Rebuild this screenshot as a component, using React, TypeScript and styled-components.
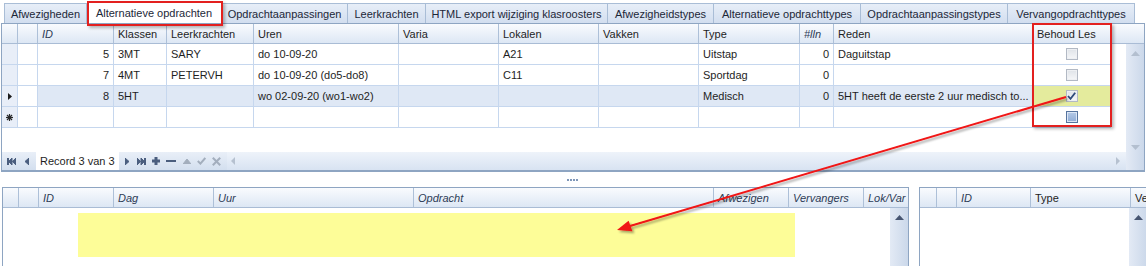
import React from 'react';
import styled, { createGlobalStyle } from 'styled-components';

const GlobalStyle = createGlobalStyle`
  html, body { margin: 0; padding: 0; background: #ffffff; }
  body {
    font-family: "Liberation Sans", Arial, sans-serif;
    font-size: 11px;
    color: #1e1e1e;
  }
  * { box-sizing: border-box; }
`;

const TOP_COLS = '16px 20px 76px 53px 87px 145px 100px 100px 100px 101px 34px 199px 78px';
const LEFT_COLS = '16px 20px 75px 100px 200px 300px 75px 75px 1fr';
const RIGHT_COLS = '17px 20px 74px 100px 1fr';

const Page = styled.div`
  position: relative;
  width: 1146px;
  height: 266px;
  overflow: hidden;
  background: #fff;
  display: flex;
  flex-direction: column;
`;

const TabStrip = styled.div`
  height: 23px;
  flex-shrink: 0;
  display: flex;
  align-items: flex-end;
  padding-left: 4px;
`;

const Tab = styled.div<{ $w: number; $active?: boolean }>`
  width: ${p => p.$w}px;
  height: ${p => (p.$active ? 22 : 20)}px;
  display: flex;
  align-items: center;
  justify-content: center;
  border: 1px solid #a9bdd6;
  border-left-width: 0;
  border-bottom: none;
  background: ${p => (p.$active ? '#ffffff' : 'linear-gradient(#e7eef8, #d2deef)')};
  color: #1c2738;
  white-space: nowrap;
  &:first-child { border-left-width: 1px; }
`;

const GridBox = styled.div`
  margin-left: 1px;
  width: 1144px;
  height: 149px;
  flex-shrink: 0;
  border: 1px solid #8ea5c2;
  border-bottom-width: 2px;
  display: flex;
  flex-direction: column;
`;

const HeaderRow = styled.div<{ $cols: string }>`
  height: 20px;
  flex-shrink: 0;
  display: grid;
  grid-template-columns: ${p => p.$cols};
  background: linear-gradient(#f9fbfe, #dde7f4);
  border-bottom: 1px solid #a9bcd5;
`;

const HeadCell = styled.div<{ $italic?: boolean }>`
  display: flex;
  align-items: center;
  padding-left: 4px;
  border-right: 1px solid #adc0d8;
  white-space: nowrap;
  overflow: hidden;
  font-style: ${p => (p.$italic ? 'italic' : 'normal')};
  color: ${p => (p.$italic ? '#2d3b56' : '#1e1e1e')};
  &:last-child { border-right: none; }
`;

const GridBody = styled.div`
  height: 108px;
  flex-shrink: 0;
  display: flex;
`;

const Rows = styled.div`
  width: 1109px;
  display: flex;
  flex-direction: column;
`;

const Row = styled.div`
  height: 21px;
  display: grid;
  grid-template-columns: ${TOP_COLS};
  border-bottom: 1px solid #c6d7ee;
`;

const Cell = styled.div<{ $right?: boolean; $bg?: string; $center?: boolean }>`
  display: flex;
  align-items: center;
  justify-content: ${p => (p.$center ? 'center' : p.$right ? 'flex-end' : 'flex-start')};
  padding: 0 4px;
  border-right: 1px solid #c6d7ee;
  background: ${p => p.$bg || 'transparent'};
  white-space: nowrap;
  overflow: hidden;
  color: #1e1e1e;
`;

const IndicatorCell = styled(Cell)`
  padding: 0;
  justify-content: center;
  background: #e8eef8;
`;

const VScroll = styled.div<{ $dark?: boolean; $offset?: number }>`
  width: 18px;
  margin-left: ${p => (p.$offset ? `${p.$offset}px` : 'auto')};
  flex-shrink: 0;
  display: flex;
  flex-direction: column;
  align-items: center;
  justify-content: space-between;
  padding: 7px 0 2px;
  background: linear-gradient(90deg, #e3eaf5, #cbd8ea);
  svg { fill: ${p => (p.$dark ? '#475571' : '#b3bfcf')}; }
`;

const ScrollCorner = styled.div`
  width: 18px;
  flex-shrink: 0;
  background: linear-gradient(90deg, #e3eaf5, #cbd8ea);
`;

const NavRow = styled.div`
  height: 18px;
  flex-shrink: 0;
  display: flex;
`;

const NavBar = styled.div`
  flex: 1;
  display: flex;
  align-items: stretch;
  padding-left: 2px;
  background: linear-gradient(#e9eff8, #d3dfef);
`;

const NavButton = styled.div<{ $w: number; $dim?: boolean }>`
  width: ${p => p.$w}px;
  flex-shrink: 0;
  display: flex;
  align-items: center;
  justify-content: center;
  svg { fill: ${p => (p.$dim ? '#a3aebd' : '#4b5e7f')}; stroke: ${p => (p.$dim ? '#a3aebd' : '#4b5e7f')}; }
`;

const RecordBox = styled.div`
  width: 83px;
  flex-shrink: 0;
  background: #ffffff;
  display: flex;
  align-items: center;
  padding-left: 4px;
  font-size: 11px;
  white-space: nowrap;
  overflow: hidden;
  color: #1e1e1e;
`;

const HScroll = styled.div`
  flex: 1;
  display: flex;
  align-items: center;
  justify-content: space-between;
  padding: 0 6px 0 4px;
  background: linear-gradient(#eef3fa, #d8e3f2);
  svg { fill: #b6c1d0; }
`;

const Splitter = styled.div`
  height: 15px;
  flex-shrink: 0;
  display: flex;
  align-items: center;
  justify-content: center;
`;

const Dot = styled.span`
  width: 2px;
  height: 2px;
  background: #7f97b9;
  margin-right: 1px;
`;

const BottomRow = styled.div`
  flex: 1;
  display: flex;
  gap: 10px;
  padding-left: 2px;
`;

const Panel = styled.div<{ $w: number }>`
  width: ${p => p.$w}px;
  flex-shrink: 0;
  border: 1px solid #8ea5c2;
  border-bottom: none;
  display: flex;
  flex-direction: column;
`;

const PanelBody = styled.div`
  flex: 1;
  display: flex;
`;

const Check = styled.span<{ $state: 'off' | 'on' | 'new' }>`
  width: 12px;
  height: 12px;
  display: flex;
  align-items: center;
  justify-content: center;
  border: 1px solid ${p => (p.$state === 'new' ? '#56749f' : '#b2b9c4')};
  background: ${p =>
    p.$state === 'new'
      ? 'linear-gradient(#b4c9e6, #8facd6)'
      : 'linear-gradient(#dfe3e8, #f6f7f9)'};
  box-shadow: inset 0 0 0 1px ${p => (p.$state === 'new' ? '#dbe6f5' : '#eef0f3')};
`;

const Overlay = styled.div`
  position: absolute;
  inset: 0;
  pointer-events: none;
`;

const RedFrame = styled.div<{ $x: number; $y: number; $w: number; $h: number }>`
  position: absolute;
  left: ${p => p.$x}px;
  top: ${p => p.$y}px;
  width: ${p => p.$w}px;
  height: ${p => p.$h}px;
  border: 2px solid #e3201f;
  box-shadow: 2px 2px 3px rgba(0, 0, 0, 0.28);
`;

const Highlight = styled.div`
  position: absolute;
  left: 78px;
  top: 213px;
  width: 717px;
  height: 44px;
  background: #fdfd98;
`;

const ArrowSvg = styled.svg`
  position: absolute;
  left: 0;
  top: 0;
`;

type Box = 'off' | 'on' | 'new';
type Rec = {
  id: string; klas: string; lk: string; uren: string; lok: string;
  type: string; lln: string; reden: string; box: Box; current?: boolean; isNew?: boolean;
};

const records: Rec[] = [
  { id: '5', klas: '3MT', lk: 'SARY', uren: 'do 10-09-20', lok: 'A21', type: 'Uitstap', lln: '0', reden: 'Daguitstap', box: 'off' },
  { id: '7', klas: '4MT', lk: 'PETERVH', uren: 'do 10-09-20 (do5-do8)', lok: 'C11', type: 'Sportdag', lln: '0', reden: '', box: 'off' },
  { id: '8', klas: '5HT', lk: '', uren: 'wo 02-09-20 (wo1-wo2)', lok: '', type: 'Medisch', lln: '0', reden: '5HT heeft de eerste 2 uur medisch to...', box: 'on', current: true },
  { id: '', klas: '', lk: '', uren: '', lok: '', type: '', lln: '', reden: '', box: 'new', isNew: true },
];

const tabs = [
  { label: 'Afwezigheden', w: 83 },
  { label: 'Alternatieve opdrachten', w: 135, active: true },
  { label: 'Opdrachtaanpassingen', w: 126 },
  { label: 'Leerkrachten', w: 78 },
  { label: 'HTML export wijziging klasroosters', w: 182 },
  { label: 'Afwezigheidstypes', w: 106 },
  { label: 'Alternatieve opdrachttypes', w: 147 },
  { label: 'Opdrachtaanpassingstypes', w: 147 },
  { label: 'Vervangopdrachttypes', w: 127 },
];

const topHeads: [string, boolean][] = [
  ['', false], ['', false], ['ID', true], ['Klassen', false], ['Leerkrachten', false],
  ['Uren', false], ['Varia', false], ['Lokalen', false], ['Vakken', false], ['Type', false],
  ['#lln', true], ['Reden', false], ['Behoud Les', false], ['', false],
];

const leftHeads = ['', '', 'ID', 'Dag', 'Uur', 'Opdracht', 'Afwezigen', 'Vervangers', 'Lok/Var'];
const rightHeads: [string, boolean][] = [['', false], ['', false], ['ID', true], ['Type', false], ['Ve', false]];

const UpArrow = () => (
  <svg width="9" height="5" viewBox="0 0 9 5"><polygon points="0,5 4.5,0 9,5" /></svg>
);
const DownArrow = () => (
  <svg width="9" height="5" viewBox="0 0 9 5"><polygon points="0,0 9,0 4.5,5" /></svg>
);

const CurrentMark = () => (
  <svg width="4" height="7" viewBox="0 0 4 7"><polygon points="0,0 4,3.5 0,7" fill="#1b1b1b" /></svg>
);
const NewMark = () => (
  <svg width="7" height="7" viewBox="0 0 7 7" stroke="#2a2a2a" strokeWidth="1.2">
    <line x1="3.5" y1="0" x2="3.5" y2="7" />
    <line x1="0" y1="3.5" x2="7" y2="3.5" />
    <line x1="1" y1="1" x2="6" y2="6" />
    <line x1="6" y1="1" x2="1" y2="6" />
  </svg>
);

const Tick = () => (
  <svg width="9" height="8" viewBox="0 0 9 8">
    <path d="M1 4 L3.5 6.8 L8.2 0.8" fill="none" stroke="#2e4a7a" strokeWidth="1.8" />
  </svg>
);

function Checkbox({ state }: { state: Box }) {
  return <Check $state={state}>{state === 'on' && <Tick />}</Check>;
}

function TopRow({ r }: { r: Rec }) {
  const sel = r.current ? '#dfe8f5' : undefined;
  return (
    <Row>
      <IndicatorCell>
        {r.current && <CurrentMark />}
        {r.isNew && <NewMark />}
      </IndicatorCell>
      <Cell />
      <Cell $right $bg={sel}>{r.id}</Cell>
      <Cell $bg={sel}>{r.klas}</Cell>
      <Cell $bg={sel}>{r.lk}</Cell>
      <Cell $bg={sel}>{r.uren}</Cell>
      <Cell $bg={sel} />
      <Cell $bg={sel}>{r.lok}</Cell>
      <Cell $bg={sel} />
      <Cell $bg={sel}>{r.type}</Cell>
      <Cell $right $bg={sel}>{r.lln}</Cell>
      <Cell $bg={sel}>{r.reden}</Cell>
      <Cell $center $bg={r.current ? '#e4eb9d' : undefined}>
        <Checkbox state={r.box} />
      </Cell>
    </Row>
  );
}

const Navigator = () => (
  <NavRow>
    <NavBar>
      <NavButton $w={14}>
        <svg width="9" height="7" viewBox="0 0 9 7" stroke="none">
          <rect x="0" y="0" width="1.5" height="7" />
          <polygon points="5,0 1.6,3.5 5,7" />
          <polygon points="9,0 5.4,3.5 9,7" />
        </svg>
      </NavButton>
      <NavButton $w={18}>
        <svg width="4" height="7" viewBox="0 0 4 7" stroke="none"><polygon points="4,0 0,3.5 4,7" /></svg>
      </NavButton>
      <RecordBox>Record 3 van 3</RecordBox>
      <NavButton $w={16}>
        <svg width="4" height="7" viewBox="0 0 4 7" stroke="none"><polygon points="0,0 4,3.5 0,7" /></svg>
      </NavButton>
      <NavButton $w={12}>
        <svg width="9" height="7" viewBox="0 0 9 7" stroke="none">
          <polygon points="0,0 3.6,3.5 0,7" />
          <polygon points="4,0 7.4,3.5 4,7" />
          <rect x="7.5" y="0" width="1.5" height="7" />
        </svg>
      </NavButton>
      <NavButton $w={18}>
        <svg width="8" height="8" viewBox="0 0 8 8" stroke="none">
          <rect x="3" y="0" width="2" height="8" />
          <rect x="0" y="3" width="8" height="2" />
        </svg>
      </NavButton>
      <NavButton $w={12}>
        <svg width="10" height="2" viewBox="0 0 10 2" stroke="none"><rect x="0" y="0" width="10" height="2" /></svg>
      </NavButton>
      <NavButton $w={19} $dim>
        <svg width="8" height="5" viewBox="0 0 8 5" stroke="none"><polygon points="0,5 4,0 8,5" /></svg>
      </NavButton>
      <NavButton $w={10} $dim>
        <svg width="9" height="8" viewBox="0 0 9 8">
          <path d="M0.8 4 L3.4 6.6 L8.3 1" fill="none" strokeWidth="2" />
        </svg>
      </NavButton>
      <NavButton $w={21} $dim>
        <svg width="9" height="9" viewBox="0 0 9 9" strokeWidth="2">
          <line x1="0.8" y1="0.8" x2="8.2" y2="8.2" />
          <line x1="8.2" y1="0.8" x2="0.8" y2="8.2" />
        </svg>
      </NavButton>
      <HScroll>
        <svg width="4" height="8" viewBox="0 0 4 8"><polygon points="4,0 0,4 4,8" /></svg>
        <svg width="4" height="8" viewBox="0 0 4 8"><polygon points="0,0 4,4 0,8" /></svg>
      </HScroll>
    </NavBar>
    <ScrollCorner />
  </NavRow>
);

export default function App() {
  return (
    <>
      <GlobalStyle />
      <Page>
        <TabStrip>
          {tabs.map(t => (
            <Tab key={t.label} $w={t.w} $active={t.active}>{t.label}</Tab>
          ))}
        </TabStrip>

        <GridBox>
          <HeaderRow $cols={TOP_COLS + ' 1fr'}>
            {topHeads.map(([h, it], i) => (
              <HeadCell key={i} $italic={it}>{h}</HeadCell>
            ))}
          </HeaderRow>
          <GridBody>
            <Rows>
              {records.map((r, i) => <TopRow key={i} r={r} />)}
            </Rows>
            <VScroll>
              <UpArrow />
              <DownArrow />
            </VScroll>
          </GridBody>
          <Navigator />
        </GridBox>

        <Splitter>
          <Dot /><Dot /><Dot /><Dot />
        </Splitter>

        <BottomRow>
          <Panel $w={907}>
            <HeaderRow $cols={LEFT_COLS}>
              {leftHeads.map((h, i) => (
                <HeadCell key={i} $italic>{h}</HeadCell>
              ))}
            </HeaderRow>
            <PanelBody>
              <VScroll $dark><UpArrow /><span /></VScroll>
            </PanelBody>
          </Panel>
          <Panel $w={240}>
            <HeaderRow $cols={RIGHT_COLS}>
              {rightHeads.map(([h, it], i) => (
                <HeadCell key={i} $italic={it}>{h}</HeadCell>
              ))}
            </HeaderRow>
            <PanelBody>
              <VScroll $dark $offset={209}><UpArrow /><span /></VScroll>
            </PanelBody>
          </Panel>
        </BottomRow>

        <Overlay>
          <Highlight />
          <RedFrame $x={87} $y={1} $w={136} $h={25} />
          <RedFrame $x={1032} $y={23} $w={80} $h={104} />
          <ArrowSvg width="1146" height="266" viewBox="0 0 1146 266">
            <defs>
              <filter id="sh" x="-10%" y="-10%" width="120%" height="140%">
                <feDropShadow dx="2" dy="2" stdDeviation="1.2" floodColor="#000" floodOpacity="0.35" />
              </filter>
            </defs>
            <g filter="url(#sh)">
              <line x1="1066" y1="97" x2="630" y2="226" stroke="#f01414" strokeWidth="2" />
              <polygon points="617,230 632.4,231.2 628.6,220.8" fill="#f01414" />
            </g>
          </ArrowSvg>
        </Overlay>
      </Page>
    </>
  );
}
